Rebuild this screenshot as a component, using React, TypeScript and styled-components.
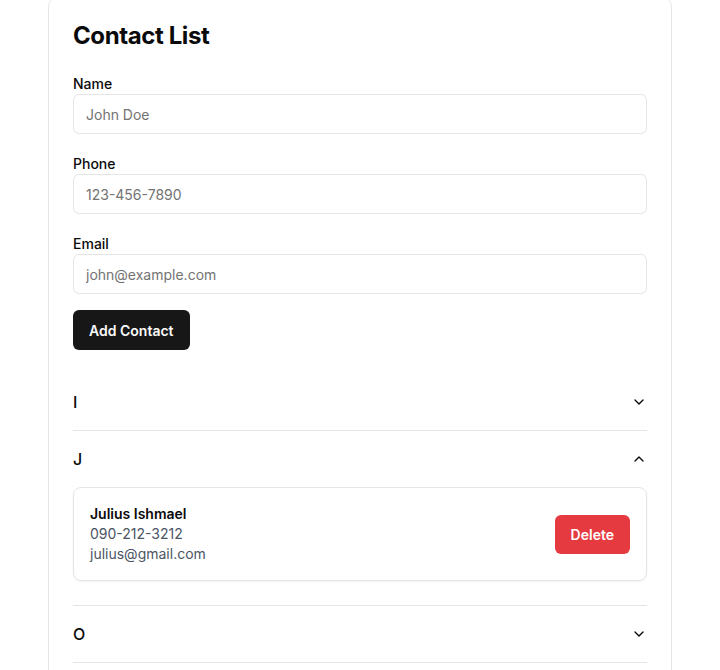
import React, { useState } from 'react';
import styled, { createGlobalStyle } from 'styled-components';
import { ChevronDown, ChevronUp } from 'lucide-react';

type TContact = {
  name: string;
  phone: string;
  email: string;
};

const groups: { letter: string; contacts: TContact[] }[] = [
  { letter: 'I', contacts: [{ name: 'Ivy Ikenna', phone: '080-111-2222', email: 'ivy@gmail.com' }] },
  { letter: 'J', contacts: [{ name: 'Julius Ishmael', phone: '090-212-3212', email: 'julius@gmail.com' }] },
  { letter: 'O', contacts: [{ name: 'Olu Obi', phone: '070-333-4444', email: 'olu@gmail.com' }] },
];

function App(): JSX.Element {
  const [open, setOpen] = useState<string>('J');

  return (
    <>
      <GlobalStyle />
      <Card>
        <Title>Contact List</Title>
        <Form onSubmit={(e) => e.preventDefault()}>
          <Field>
            <Label htmlFor='name'>Name</Label>
            <Input id='name' placeholder='John Doe' />
          </Field>
          <Field>
            <Label htmlFor='phone'>Phone</Label>
            <Input id='phone' placeholder='123-456-7890' />
          </Field>
          <Field>
            <Label htmlFor='email'>Email</Label>
            <Input id='email' placeholder='john@example.com' />
          </Field>
          <AddButton type='submit'>Add Contact</AddButton>
        </Form>

        <Accordion>
          {groups.map((g) => {
            const isOpen = open === g.letter;
            return (
              <Item key={g.letter}>
                <Trigger onClick={() => setOpen(isOpen ? '' : g.letter)}>
                  <span>{g.letter}</span>
                  {isOpen ? <ChevronUp size={16} strokeWidth={2} /> : <ChevronDown size={16} strokeWidth={2} />}
                </Trigger>
                {isOpen && (
                  <Content>
                    {g.contacts.map((c) => (
                      <ContactCard key={c.email}>
                        <div>
                          <ContactName>{c.name}</ContactName>
                          <ContactMeta>{c.phone}</ContactMeta>
                          <ContactMeta>{c.email}</ContactMeta>
                        </div>
                        <DeleteButton>Delete</DeleteButton>
                      </ContactCard>
                    ))}
                  </Content>
                )}
              </Item>
            );
          })}
        </Accordion>
      </Card>
    </>
  );
}

export default App;

const GlobalStyle = createGlobalStyle`
  * { box-sizing: border-box; }
  body {
    margin: 0;
    background: #ffffff;
    font-family: Inter, "Liberation Sans", sans-serif;
    color: #0a0a0a;
  }
`;

const Card = styled.div`
  width: 624px;
  margin: -5px auto 0;
  padding: 24px;
  background: #fff;
  border: 1px solid #e5e5e5;
  border-radius: 12px;
`;

const Title = styled.h1`
  margin: 0 0 21px;
  font-size: 24px;
  line-height: 32px;
  font-weight: 700;
  letter-spacing: -0.4px;
`;

const Form = styled.form`
  display: flex;
  flex-direction: column;
  align-items: flex-start;
`;

const Field = styled.div`
  display: flex;
  flex-direction: column;
  width: 100%;
  margin-bottom: 19px;

  &:nth-of-type(3) {
    margin-bottom: 16px;
  }
`;

const Label = styled.label`
  font-size: 14px;
  line-height: 20px;
  font-weight: 500;
  margin-top: 1px;
`;

const Input = styled.input`
  height: 40px;
  width: 100%;
  padding: 0 12px;
  border: 1px solid #e5e5e5;
  border-radius: 6px;
  font-family: inherit;
  font-size: 14px;
  color: #0a0a0a;
  outline: none;

  &::placeholder {
    color: #737373;
  }
`;

const AddButton = styled.button`
  height: 40px;
  padding: 0 16px;
  border: none;
  border-radius: 6px;
  background: #171717;
  color: #fafafa;
  font-family: inherit;
  font-size: 14px;
  font-weight: 600;
  cursor: pointer;
`;

const Accordion = styled.div`
  margin-top: 24px;
`;

const Item = styled.div`
  border-bottom: 1px solid #e5e5e5;
`;

const Trigger = styled.button`
  display: flex;
  align-items: center;
  justify-content: space-between;
  width: 100%;
  height: 56px;
  padding: 0;
  border: none;
  background: none;
  font-family: inherit;
  font-size: 16px;
  font-weight: 500;
  color: #0a0a0a;
  cursor: pointer;
`;

const Content = styled.div`
  padding-bottom: 24px;
`;

const ContactCard = styled.div`
  display: flex;
  align-items: center;
  justify-content: space-between;
  padding: 16px;
  border: 1px solid #e5e5e5;
  border-radius: 8px;
  box-shadow: 0 1px 2px rgba(0, 0, 0, 0.05);
`;

const ContactName = styled.div`
  font-size: 14px;
  line-height: 20px;
  font-weight: 600;
  color: #0a0a0a;
`;

const ContactMeta = styled.div`
  font-size: 14px;
  line-height: 20px;
  color: #4b5563;
`;

const DeleteButton = styled.button`
  height: 39px;
  padding: 0 16px;
  border: none;
  border-radius: 6px;
  background: #e53a40;
  color: #fff;
  font-family: inherit;
  font-size: 14px;
  font-weight: 600;
  cursor: pointer;
`;
